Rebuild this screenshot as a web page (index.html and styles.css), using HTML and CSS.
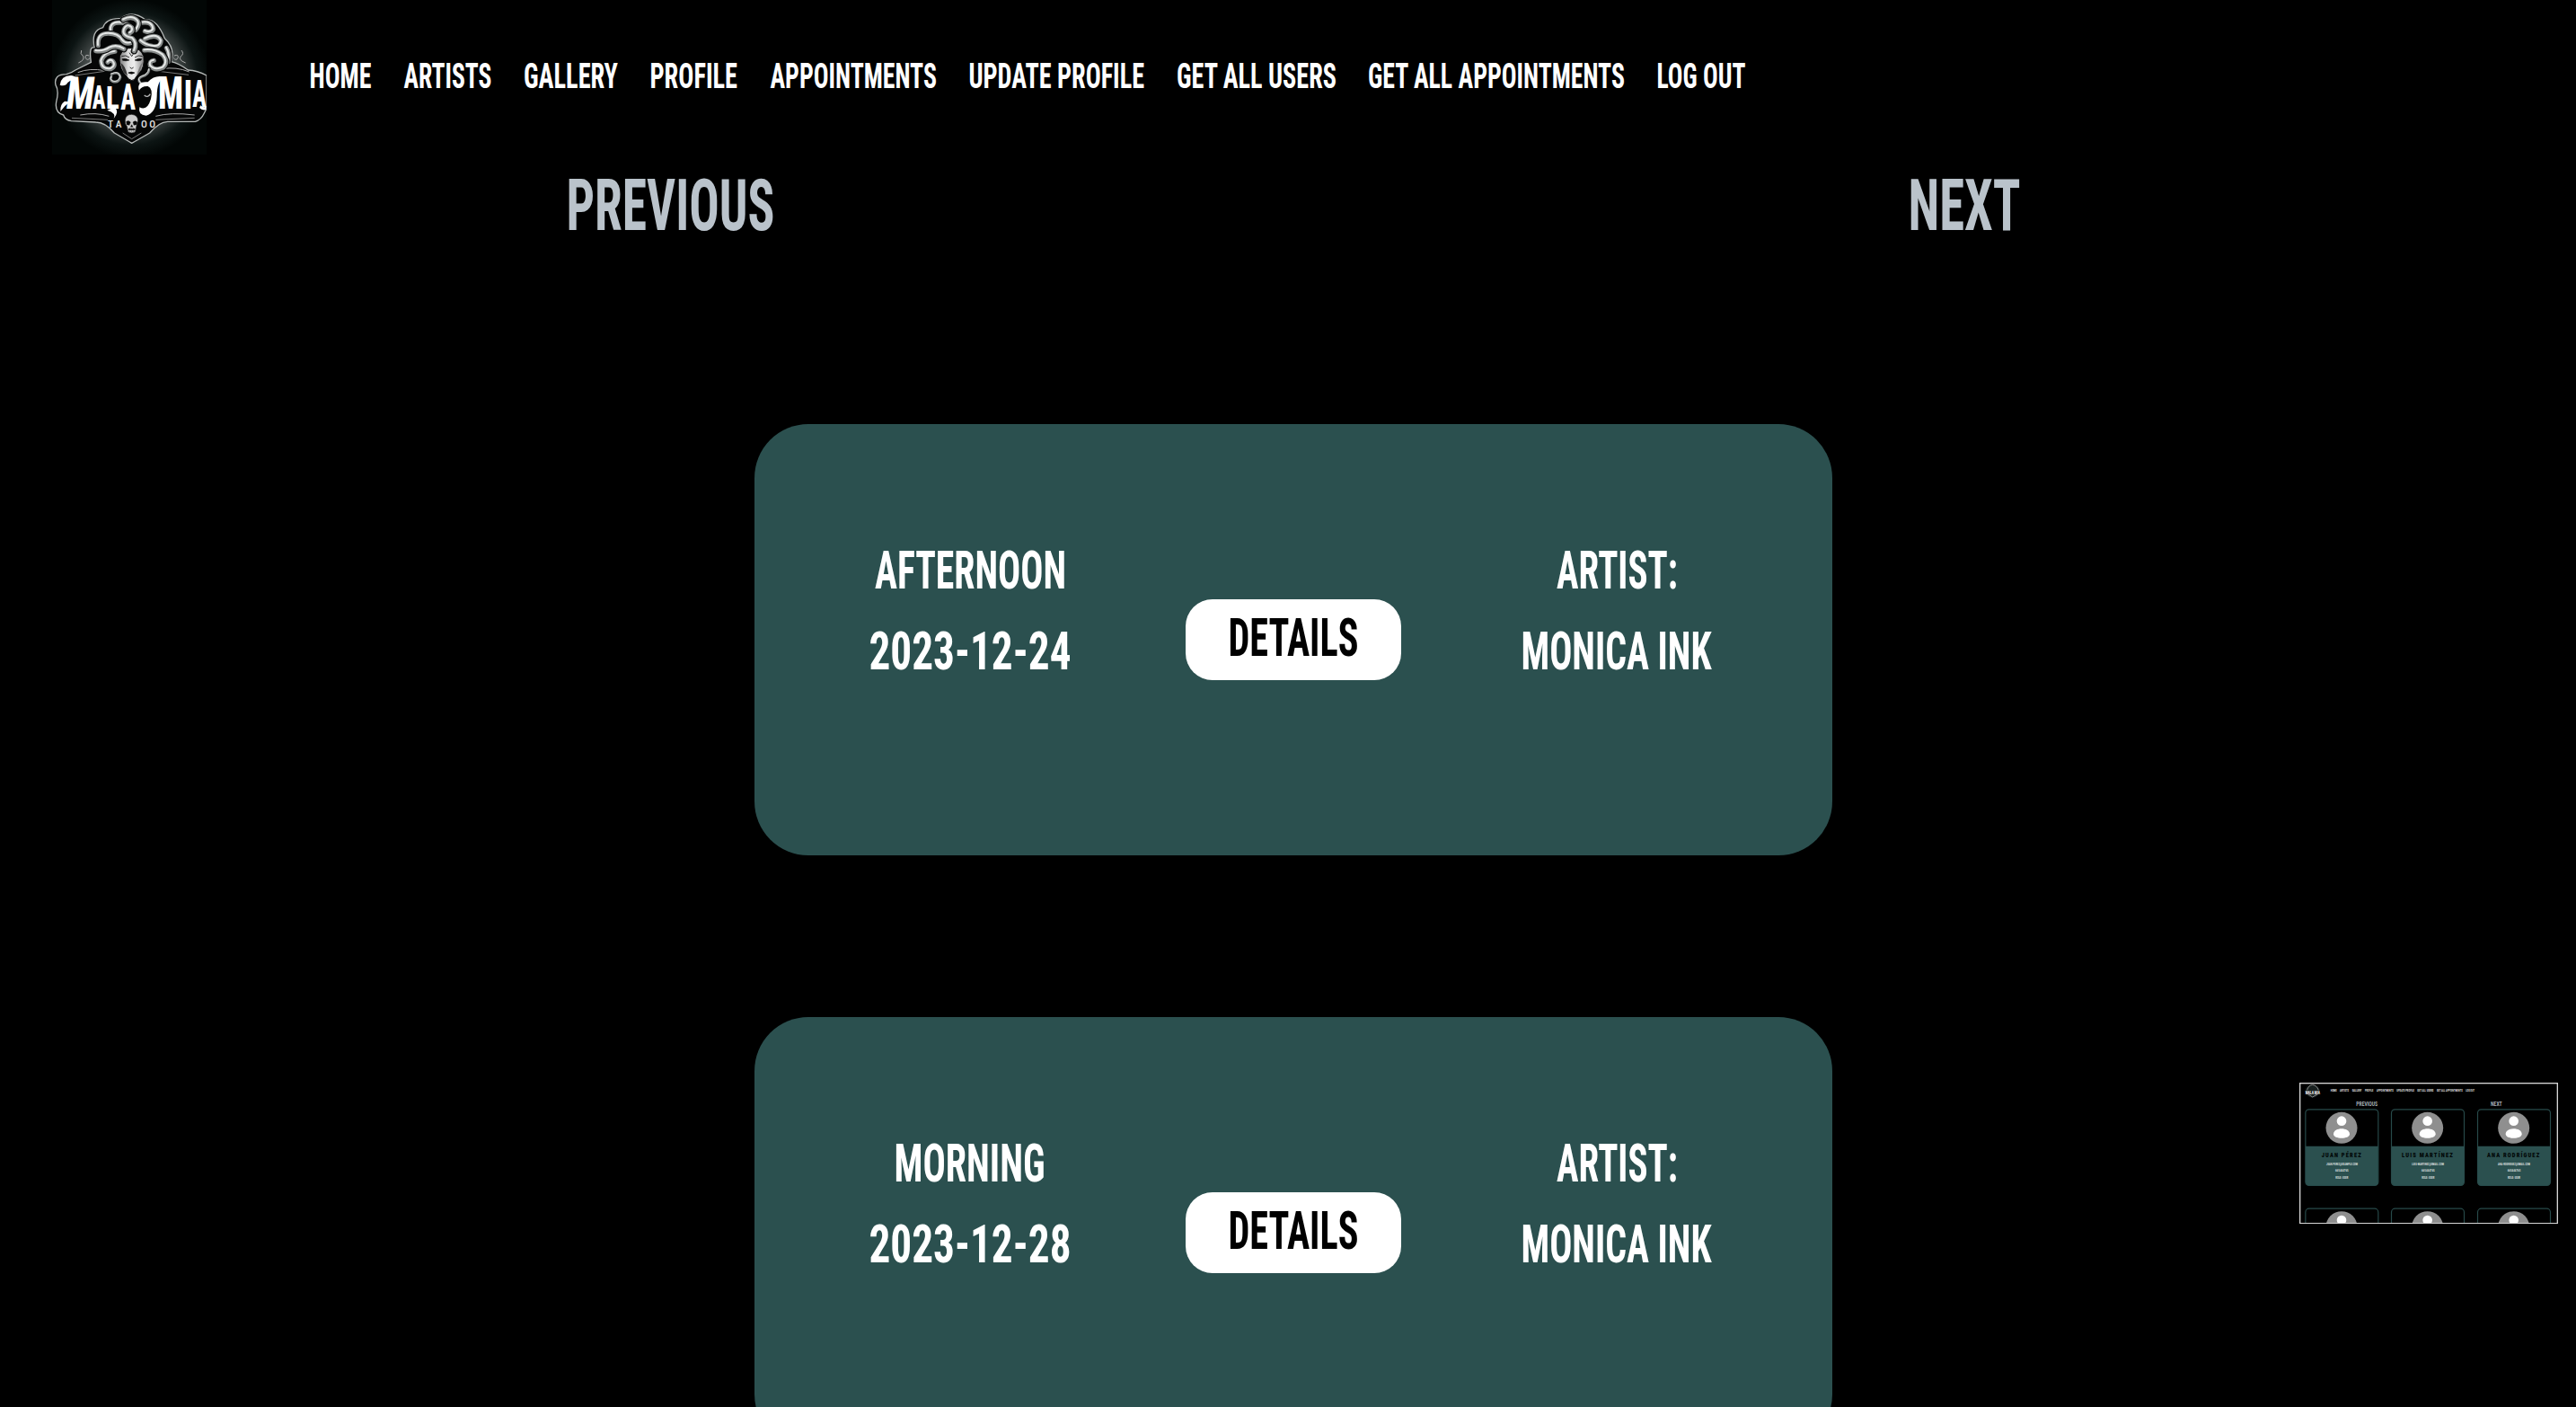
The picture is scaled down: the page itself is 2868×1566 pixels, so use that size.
FILE: index.html
```html
<!DOCTYPE html>
<html lang="en">
<head>
<meta charset="utf-8">
<title>Mala Mia Tattoo</title>
<link rel="stylesheet" href="styles.css">
</head>
<body>
<header class="header">
  <svg class="logo" viewBox="54 0 516 516">
    <defs>
      <radialGradient id="halo" gradientUnits="userSpaceOnUse" cx="318" cy="262" r="265">
        <stop offset="0" stop-color="#8a9492"/><stop offset=".6" stop-color="#444a49"/><stop offset=".84" stop-color="#0c1413"/><stop offset="1" stop-color="#020605"/>
      </radialGradient>
      <linearGradient id="face" x1="0" x2="1"><stop offset="0" stop-color="#777"/><stop offset=".35" stop-color="#ddd"/><stop offset=".6" stop-color="#eee"/><stop offset="1" stop-color="#888"/></linearGradient>
      <path id="s1" d="M250 106Q246 72 284 76Q312 78 314 92"/>
      <path id="s2" d="M292 66Q322 50 340 70Q348 82 334 100"/>
      <path id="s3" d="M352 76Q388 70 392 98Q384 112 364 104"/>
      <path id="s4" d="M208 152Q204 112 242 112Q276 112 288 134Q300 150 320 142"/>
      <path id="s5" d="M364 130Q404 110 418 136Q416 160 388 154Q366 150 350 136"/>
      <path id="s6" d="M328 170Q340 144 322 128Q288 122 294 100Q304 78 320 92Q326 104 314 110"/>
      <path id="s7" d="M200 170Q226 174 246 160Q270 148 294 164"/>
      <path id="s8" d="M264 172Q226 176 218 204Q220 234 250 230Q270 220 256 204Q246 198 240 208"/>
      <path id="s9" d="M362 168Q398 164 424 184Q444 208 424 226Q398 238 382 220Q378 204 394 202"/>
      <path id="s10" d="M252 248Q278 236 282 258Q276 278 256 272Q246 266 252 256"/>
      <path id="s11" d="M378 232Q376 250 354 256Q336 264 350 278"/>
      <path id="s12" d="M436 160Q448 180 442 206"/>
    </defs>
    <rect x="54" y="0" width="516" height="516" fill="url(#halo)"/>
    <!-- badge outline -->
    <path d="M570 252Q540 236 508 234Q478 212 452 206Q466 160 430 128Q404 62 366 66Q322 32 282 62Q234 60 224 92Q182 102 196 160Q176 150 184 208L132 234Q118 244 102 248Q58 248 66 284Q78 304 68 340Q62 376 92 384Q96 400 118 404L200 408Q232 408 262 444Q300 466 320 478Q342 466 380 444Q410 408 440 406L532 406Q552 400 562 378L570 362Z" fill="#050606" stroke="#b4b8b7" stroke-width="4"/>
    <path d="M120 394L240 400M400 400L530 394M290 444L320 464L352 444M130 252L230 238M410 238L510 250" fill="none" stroke="#777" stroke-width="3"/>
    <path d="M148 384Q200 374 244 388M400 388Q450 374 530 384M140 242Q180 226 230 236M420 230Q470 222 512 240" fill="none" stroke="#aaa" stroke-width="3"/>
    <path d="M152 168Q146 180 158 188Q164 200 142 210M178 186Q162 180 166 194Q172 204 180 194M486 168Q496 180 484 188Q474 200 500 210M462 186Q478 180 474 194Q468 204 460 194" fill="none" stroke="#aaa" stroke-width="3"/>
    <path d="M280 186Q292 160 320 160Q350 160 360 188Q364 226 346 242L328 266Q320 272 310 264L292 242Q276 220 280 186Z" fill="url(#face)" stroke="#080808" stroke-width="3"/>
    <path d="M288 197Q300 193 312 201Q300 205 290 202ZM330 201Q342 193 354 197L350 202Q340 205 330 201ZM308 243Q319 237 330 243Q320 251 308 243Z" fill="#080808" stroke="#080808" stroke-width="1.500"/>
    <path d="M286 188Q300 182 312 192M330 192Q342 182 356 188M312 176L320 188L328 176M314 225L320 229L326 225" fill="none" stroke="#111" stroke-width="2.500"/>
    <path d="M283 210Q300 220 306 254L292 240Z" fill="#333"/>
    <path d="M357 206Q344 222 336 254L348 238Z" fill="#777"/>
    <!-- snake hair: shadow, body and highlight of each strand -->
    <g class="strand"><use href="#s12"/><use href="#s12"/><use href="#s12"/></g>
    <g class="strand"><use href="#s1"/><use href="#s1"/><use href="#s1"/></g>
    <g class="strand"><use href="#s3"/><use href="#s3"/><use href="#s3"/></g>
    <g class="strand"><use href="#s2"/><use href="#s2"/><use href="#s2"/></g>
    <g class="strand"><use href="#s4"/><use href="#s4"/><use href="#s4"/></g>
    <g class="strand"><use href="#s5"/><use href="#s5"/><use href="#s5"/></g>
    <g class="strand"><use href="#s6"/><use href="#s6"/><use href="#s6"/></g>
    <g class="strand"><use href="#s8"/><use href="#s8"/><use href="#s8"/></g>
    <g class="strand"><use href="#s9"/><use href="#s9"/><use href="#s9"/></g>
    <g class="strand"><use href="#s7"/><use href="#s7"/><use href="#s7"/></g>
    <g class="strand thin"><use href="#s10"/><use href="#s10"/><use href="#s10"/></g>
    <g class="strand thin"><use href="#s11"/><use href="#s11"/><use href="#s11"/></g>
    <!-- lettering -->
    <g class="lettering">
      <text x="96" y="364" font-size="150" textLength="92" lengthAdjust="spacingAndGlyphs" transform="translate(96 364) skewX(-8) translate(-96 -364)">M</text>
      <text x="188" y="362" font-size="112" textLength="44" lengthAdjust="spacingAndGlyphs">A</text>
      <text x="234" y="362" font-size="104" textLength="44" lengthAdjust="spacingAndGlyphs">L</text>
      <text x="283" y="366" font-size="122" textLength="50" lengthAdjust="spacingAndGlyphs">A</text>
      <text x="408" y="364" font-size="150" textLength="84" lengthAdjust="spacingAndGlyphs">M</text>
      <text x="494" y="362" font-size="134" textLength="28" lengthAdjust="spacingAndGlyphs">I</text>
      <text x="523" y="358" font-size="128" textLength="46" lengthAdjust="spacingAndGlyphs">A</text>
    </g>
    <path d="M80 284Q84 252 116 252Q132 250 138 270Q116 264 106 276Q98 290 80 284ZM82 372Q80 348 96 338L114 340Q94 354 82 372ZM262 358Q280 372 260 396Q270 378 238 368ZM344 302Q336 270 374 274Q398 248 430 258Q404 268 404 322Q402 378 368 386Q340 384 346 358Q372 372 384 330Q392 296 374 288Q354 286 344 302ZM550 352Q560 362 570 354L568 366Q556 370 546 360Z" fill="#fff"/>
    <path d="M362 318Q374 328 382 314" fill="none" stroke="#bbb" stroke-width="4"/>
    <g class="tagline">
      <text x="240" y="426" textLength="46" lengthAdjust="spacing">TA</text>
      <text x="351" y="426" textLength="48" lengthAdjust="spacing">OO</text>
    </g>
    <path d="M298 400Q300 382 320 382Q340 384 341 402L336 420L332 440Q320 448 308 440L304 422Q296 414 298 400Z" fill="#ccc" stroke="#222" stroke-width="2"/>
    <path d="M302 406Q310 400 316 408L312 418L303 416ZM324 408Q332 400 338 408L336 416L327 418ZM320 416L324 424H316ZM309 430H331V434H309ZM314 426V440M320 428V442M326 426V440" fill="#080808" stroke="#080808" stroke-width="1"/>
  </svg>
  <nav class="nav">
    <svg class="label" width="66.5"><text x="-1.5" y="28" textLength="69" lengthAdjust="spacingAndGlyphs">HOME</text></svg>
    <svg class="label" width="97"><text x="-.5" y="28" textLength="98" lengthAdjust="spacingAndGlyphs">ARTISTS</text></svg>
    <svg class="label" width="103.5"><text x="-1" y="28" textLength="105" lengthAdjust="spacingAndGlyphs">GALLERY</text></svg>
    <svg class="label" width="95"><text x="-1.5" y="28" textLength="97.5" lengthAdjust="spacingAndGlyphs">PROFILE</text></svg>
    <svg class="label" width="184.5"><text x="-.5" y="28" textLength="185.5" lengthAdjust="spacingAndGlyphs">APPOINTMENTS</text></svg>
    <svg class="label" width="193"><text x="-1.5" y="28" textLength="195.5" lengthAdjust="spacingAndGlyphs">UPDATE PROFILE</text></svg>
    <svg class="label" width="176"><text x="-1" y="28" textLength="178" lengthAdjust="spacingAndGlyphs">GET ALL USERS</text></svg>
    <svg class="label" width="284"><text x="-1" y="28" textLength="286" lengthAdjust="spacingAndGlyphs">GET ALL APPOINTMENTS</text></svg>
    <svg class="label" width="97"><text x="-1.5" y="28" textLength="99" lengthAdjust="spacingAndGlyphs">LOG OUT</text></svg>
  </nav>
</header>

<div class="pager">
  <svg class="label label-xl" width="227"><text x="-3.5" y="56" textLength="232" lengthAdjust="spacingAndGlyphs">PREVIOUS</text></svg>
  <svg class="label label-xl" width="121"><text x="-3.5" y="56" textLength="125" lengthAdjust="spacingAndGlyphs">NEXT</text></svg>
</div>

<main class="appointments">
  <article class="card">
    <div class="column">
      <svg class="label label-lg" width="210"><text x="-1" y="42" textLength="213" lengthAdjust="spacingAndGlyphs">AFTERNOON</text></svg>
      <svg class="label label-lg" width="222"><text x="-1.5" y="42" textLength="225" lengthAdjust="spacingAndGlyphs">2023-12-24</text></svg>
    </div>
    <div class="button"><svg class="label label-lg" width="141"><text x="-2.5" y="42" textLength="145" lengthAdjust="spacingAndGlyphs">DETAILS</text></svg></div>
    <div class="column">
      <svg class="label label-lg" width="132"><text x="-1" y="42" textLength="135" lengthAdjust="spacingAndGlyphs">ARTIST:</text></svg>
      <svg class="label label-lg" width="209"><text x="-2.5" y="42" textLength="212" lengthAdjust="spacingAndGlyphs">MONICA INK</text></svg>
    </div>
  </article>
  <article class="card">
    <div class="column">
      <svg class="label label-lg" width="164"><text x="-2.5" y="42" textLength="168" lengthAdjust="spacingAndGlyphs">MORNING</text></svg>
      <svg class="label label-lg" width="222"><text x="-1.5" y="42" textLength="225" lengthAdjust="spacingAndGlyphs">2023-12-28</text></svg>
    </div>
    <div class="button"><svg class="label label-lg" width="141"><text x="-2.5" y="42" textLength="145" lengthAdjust="spacingAndGlyphs">DETAILS</text></svg></div>
    <div class="column">
      <svg class="label label-lg" width="132"><text x="-1" y="42" textLength="135" lengthAdjust="spacingAndGlyphs">ARTIST:</text></svg>
      <svg class="label label-lg" width="209"><text x="-2.5" y="42" textLength="212" lengthAdjust="spacingAndGlyphs">MONICA INK</text></svg>
    </div>
  </article>
</main>

<!-- floating preview of the users page -->
<svg class="preview" viewBox="30 29 864 472">
  <defs>
    <g id="avatar"><circle cx="122" cy="63" r="52.500" fill="#8f8f8f"/><circle cx="122" cy="40" r="16" fill="#fff"/><path d="M95 84C95 60 149 60 149 84C149 102 95 102 95 84Z" fill="#fff"/></g>
    <g id="user"><rect x="1.500" y="1.500" width="243" height="254" rx="12" fill="#000" stroke="#274a4a" stroke-width="3.500"/><path d="M2 124H244V244Q244 255 233 255H13Q2 255 2 244Z" fill="#2b504f"/><use href="#avatar"/></g>
  </defs>
  <rect x="30" y="29" width="864" height="472" fill="#000"/>
  <ellipse cx="74" cy="57" rx="24" ry="22" fill="#18201f"/>
  <path d="M56 54Q60 38 74 36Q88 38 94 54M60 68L74 77L90 68" fill="none" stroke="#888" stroke-width="3"/>
  <text x="50" y="67" class="p-logo" textLength="49" lengthAdjust="spacingAndGlyphs">MALA MIA</text>
  <g class="p-nav">
    <text x="134" y="59" textLength="21" lengthAdjust="spacingAndGlyphs">HOME</text>
    <text x="165" y="59" textLength="30" lengthAdjust="spacingAndGlyphs">ARTISTS</text>
    <text x="206" y="59" textLength="32" lengthAdjust="spacingAndGlyphs">GALLERY</text>
    <text x="249" y="59" textLength="28" lengthAdjust="spacingAndGlyphs">PROFILE</text>
    <text x="288" y="59" textLength="56" lengthAdjust="spacingAndGlyphs">APPOINTMENTS</text>
    <text x="355" y="59" textLength="59" lengthAdjust="spacingAndGlyphs">UPDATE PROFILE</text>
    <text x="424" y="59" textLength="54" lengthAdjust="spacingAndGlyphs">GET ALL USERS</text>
    <text x="489" y="59" textLength="86" lengthAdjust="spacingAndGlyphs">GET ALL APPOINTMENTS</text>
    <text x="586" y="59" textLength="29" lengthAdjust="spacingAndGlyphs">LOG OUT</text>
  </g>
  <g class="p-pager">
    <text x="220" y="106" textLength="71" lengthAdjust="spacingAndGlyphs">PREVIOUS</text>
    <text x="669" y="106" textLength="38" lengthAdjust="spacingAndGlyphs">NEXT</text>
  </g>
  <use href="#user" x="49" y="117"/><use href="#user" x="336" y="117"/><use href="#user" x="624" y="117"/>
  <use href="#user" x="49" y="448"/><use href="#user" x="336" y="448"/><use href="#user" x="624" y="448"/>
  <g class="p-name">
    <text x="104" y="278" textLength="136" lengthAdjust="spacingAndGlyphs">JUAN PÉREZ</text>
    <text x="372" y="278" textLength="174" lengthAdjust="spacingAndGlyphs">LUIS MARTÍNEZ</text>
    <text x="657" y="278" textLength="178" lengthAdjust="spacingAndGlyphs">ANA RODRÍGUEZ</text>
  </g>
  <g class="p-info">
    <text x="120" y="305" textLength="105" lengthAdjust="spacingAndGlyphs">JUAN.PEREZ@EXAMPLE.COM</text>
    <text x="150" y="327" textLength="44" lengthAdjust="spacingAndGlyphs">665444765</text>
    <text x="151" y="349" textLength="42" lengthAdjust="spacingAndGlyphs">ROLE: USER</text>
    <text x="406" y="305" textLength="107" lengthAdjust="spacingAndGlyphs">LUIS-MARTINEZ@GMAIL.COM</text>
    <text x="438" y="327" textLength="44" lengthAdjust="spacingAndGlyphs">665444765</text>
    <text x="439" y="349" textLength="42" lengthAdjust="spacingAndGlyphs">ROLE: USER</text>
    <text x="693" y="305" textLength="108" lengthAdjust="spacingAndGlyphs">ANA-RODRIGUEZ@GMAIL.COM</text>
    <text x="725" y="327" textLength="44" lengthAdjust="spacingAndGlyphs">665444765</text>
    <text x="726" y="349" textLength="42" lengthAdjust="spacingAndGlyphs">ROLE: USER</text>
  </g>
  <rect x="32" y="31" width="860" height="468" fill="none" stroke="#d6d6d6" stroke-width="4"/>
</svg>
</body>
</html>
```
FILE: styles.css
```css
* { box-sizing: border-box; }
body {
  margin: 0;
  height: 1566px;
  overflow: hidden;
  background: #000;
  color: #fff;
  font-family: "Roboto Condensed", Roboto, "Liberation Sans", sans-serif;
  font-weight: 700;
}
svg { display: block; flex: none; }

.label {
  height: 28px;
  overflow: visible;
  fill: currentColor;
  font-size: 39.4px;
}
.label-lg { height: 42px; font-size: 59.1px; }
.label-xl { height: 56px; font-size: 78.8px; }

.header { display: flex; height: 172px; padding-left: 58px; }
.logo { width: 172px; height: 172px; }
.strand { fill: none; stroke-linecap: round; stroke-linejoin: round; }
.strand use:nth-child(1) { stroke: #080909; stroke-width: 22px; }
.strand use:nth-child(2) { stroke: #858988; stroke-width: 15px; }
.strand use:nth-child(3) { stroke: #e6e8e7; stroke-width: 6px; transform: translate(-1px, -2px); }
.thin use:nth-child(1) { stroke-width: 14px; }
.thin use:nth-child(2) { stroke-width: 8px; }
.thin use:nth-child(3) { stroke-width: 3px; }
.lettering { fill: #fff; font-weight: 800; }
.tagline { fill: #e4e4e4; font-size: 34px; font-weight: 500; }

.nav { display: flex; gap: 37.6px; padding: 70px 0 0 115.7px; }

.pager {
  display: flex;
  justify-content: space-between;
  padding: 28px 619.5px 0 634px;
  color: #bac3cb;
}

.appointments {
  display: flex;
  flex-direction: column;
  gap: 180px;
  width: 1200px;
  margin: 216px 0 0 840px;
}
.card {
  display: flex;
  flex: none;
  align-items: center;
  justify-content: space-between;
  height: 480px;
  padding: 0 120px;
  border-radius: 60px;
  background: #2b504f;
}
.column {
  display: flex;
  flex-direction: column;
  align-items: center;
  gap: 48px;
  width: 240px;
  padding-bottom: 66px;
}
.button {
  width: 240px;
  height: 90px;
  padding: 21px 0 0 50px;
  border-radius: 30px;
  background: #fff;
  color: #000;
}

.preview {
  position: absolute;
  left: 2560px;
  top: 1204.67px;
  width: 288px;
  height: 157.33px;
}
.p-logo { fill: #eee; font-size: 16px; }
.p-nav { fill: #ddd; font-size: 11.5px; }
.p-pager { fill: #bac3cb; font-size: 23px; font-weight: 500; }
.p-name { fill: #020808; font-size: 23px; font-weight: 900; letter-spacing: 4px; }
.p-info { fill: #d5dddd; font-size: 12px; }
```
